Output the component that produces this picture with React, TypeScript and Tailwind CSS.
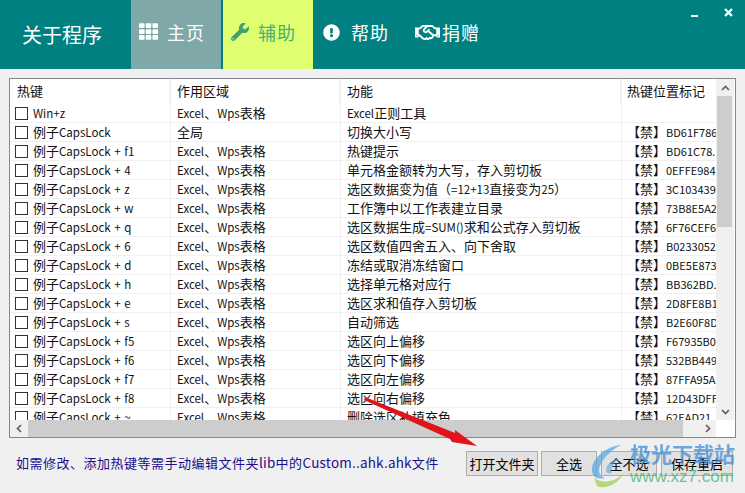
import { FaTh, FaWrench, FaExclamationCircle, FaRegHandshake } from "react-icons/fa";

const KEYS: [string, string, string, string][] = [
  ["Win+z", "Excel、Wps表格", "Excel正则工具", ""],
  ["例子CapsLock", "全局", "切换大小写", "【禁】BD61F786"],
  ["例子CapsLock + f1", "Excel、Wps表格", "热键提示", "【禁】BD61C78."],
  ["例子CapsLock + 4", "Excel、Wps表格", "单元格金额转为大写\uFF0C存入剪切板", "【禁】0EFFE984."],
  ["例子CapsLock + z", "Excel、Wps表格", "选区数据变为值\uFF08=12+13直接变为25\uFF09", "【禁】3C103439"],
  ["例子CapsLock + w", "Excel、Wps表格", "工作簿中以工作表建立目录", "【禁】73B8E5A2"],
  ["例子CapsLock + q", "Excel、Wps表格", "选区数据生成=SUM()求和公式存入剪切板", "【禁】6F76CEF6"],
  ["例子CapsLock + 6", "Excel、Wps表格", "选区数值四舍五入、向下舍取", "【禁】B0233052"],
  ["例子CapsLock + d", "Excel、Wps表格", "冻结或取消冻结窗口", "【禁】0BE5E873"],
  ["例子CapsLock + h", "Excel、Wps表格", "选择单元格对应行", "【禁】BB362BD."],
  ["例子CapsLock + e", "Excel、Wps表格", "选区求和值存入剪切板", "【禁】2D8FE8B1"],
  ["例子CapsLock + s", "Excel、Wps表格", "自动筛选", "【禁】B2E60F8D"],
  ["例子CapsLock + f5", "Excel、Wps表格", "选区向上偏移", "【禁】F67935B0"],
  ["例子CapsLock + f6", "Excel、Wps表格", "选区向下偏移", "【禁】532BB449"],
  ["例子CapsLock + f7", "Excel、Wps表格", "选区向左偏移", "【禁】87FFA95A"],
  ["例子CapsLock + f8", "Excel、Wps表格", "选区向右偏移", "【禁】12D43DFF"],
  ["例子CapsLock + ~", "Excel、Wps表格", "删除选区补填充色", "【禁】62EAD21"],
];

// CJK runs stay at the element's size; Latin runs are set a little smaller, as in the reference.
const Mixed = ({ text, latin = "text-[11.5px]" }: { text: string; latin?: string }) => (
  <>
    {text.split(/([\x20-\x7e]+)/).map((part, i) =>
      i % 2 === 1 ? (
        <span key={i} className={latin}>{part}</span>
      ) : (
        part
      ),
    )}
  </>
);

const Btn = ({ w, children }: { w: string; children: string }) => (
  <button className={`${w} h-[25px] border border-[#adadad] bg-[#e1e1e1] text-[13px] text-black`}>{children}</button>
);

export default function App() {
  return (
    <div className="relative w-[745px] h-[493px] overflow-hidden bg-[#f0f0f0] font-['Noto_Sans_CJK_SC','Microsoft_YaHei',sans-serif]">
      <header className="h-[69px] bg-[#008080] flex text-white relative">
        <div className="w-[131px] pl-[22px] pt-[21px] text-[20px] leading-[28px]">关于程序</div>
        <div className="w-[90px] bg-[#80a8a8] flex items-start pt-[20px] pl-[8px] text-[18px] leading-[24px] gap-[9px]">
          <FaTh className="w-[19px] h-[19px] mt-[2px]" />
          <span className="tracking-[1px]">主页</span>
        </div>
        <div className="ml-[2px] w-[90px] bg-[#e0ff70] text-[#4caf70] flex items-start pt-[20px] pl-[8px] text-[18px] leading-[24px] gap-[9px]">
          <FaWrench className="w-[18px] h-[18px] mt-[3px] text-[#3f9f72]" />
          <span className="tracking-[1px]">辅助</span>
        </div>
        <div className="ml-[10px] flex items-start pt-[20px] text-[18px] leading-[24px] gap-[11px]">
          <FaExclamationCircle className="w-[17px] h-[17px] mt-[4px]" />
          <span className="tracking-[1px]">帮助</span>
        </div>
        <div className="ml-[26px] flex items-start pt-[20px] text-[18px] leading-[24px] gap-[2px]">
          <FaRegHandshake className="w-[25px] h-[25px]" />
          <span className="tracking-[1px]">捐赠</span>
        </div>
        <div className="absolute left-[691px] top-[15px] w-[7px] h-[2px] bg-white" />
        <svg className="absolute left-[724px] top-[8px]" width="9" height="9" viewBox="0 0 9 9">
          <path d="M1 1l7 7M8 1l-7 7" stroke="#fff" strokeWidth="2.4" />
        </svg>
      </header>

      <div className="mt-[9px] ml-[9px] w-[727px] h-[360px] border border-[#828790] bg-white flex flex-col text-[13px] text-[#111]">
        <div className="flex flex-1 min-h-0">
          <div className="w-[706px] overflow-hidden">
            <div className="flex h-[25px] leading-[24px]">
              <div className="w-[161px] pl-[7px] border-r-2 border-[#f0f0f0]">热键</div>
              <div className="w-[170px] pl-[6px] border-r-2 border-[#f0f0f0]">作用区域</div>
              <div className="w-[281px] pl-[6px] border-r-2 border-[#f0f0f0]">功能</div>
              <div className="flex-1 pl-[5px] whitespace-nowrap">热键位置标记</div>
            </div>
            {KEYS.map((r, i) => (
              <div key={i} className="flex h-[19px] leading-[18px] border-b border-[#f0f0f0] whitespace-nowrap">
                <div className="w-[161px] flex items-center pl-[5px] gap-[5px] border-r border-[#f0f0f0]">
                  <span className="w-[13px] h-[13px] border border-[#333] bg-white shrink-0" />
                  <span className="[word-spacing:1px]"><Mixed text={r[0]} /></span>
                </div>
                <div className="w-[170px] pl-[6px] border-r border-[#f0f0f0]"><Mixed text={r[1]} /></div>
                <div className="w-[281px] pl-[6px] border-r border-[#f0f0f0]"><Mixed text={r[2]} /></div>
                <div className="w-[94px] overflow-hidden pl-[5px]"><Mixed text={r[3]} latin="text-[11px]" /></div>
              </div>
            ))}
          </div>
          <div className="w-[18px] bg-[#f0f0f0] flex flex-col relative">
            <div className="h-[17px] flex items-center justify-center">
              <svg width="9" height="6" viewBox="0 0 9 6"><path d="M1 5l3.5-3.5L8 5" fill="none" stroke="#606060" strokeWidth="1.7" /></svg>
            </div>
            <div className="h-[131px] ml-[1px] mr-[2px] bg-[#cdcdcd]" />
            <div className="flex-1" />
            <div className="h-[17px] flex items-center justify-center">
              <svg width="9" height="6" viewBox="0 0 9 6"><path d="M1 1l3.5 3.5L8 1" fill="none" stroke="#606060" strokeWidth="1.7" /></svg>
            </div>
          </div>
        </div>
        <div className="h-[17px] flex items-stretch bg-[#f0f0f0]">
          <div className="w-[18px] flex items-center justify-center">
            <svg width="6" height="9" viewBox="0 0 6 9"><path d="M5 1L1.5 4.5L5 8" fill="none" stroke="#606060" strokeWidth="1.7" /></svg>
          </div>
          <div className="w-[655px] bg-[#cdcdcd]" />
          <div className="w-[33px] flex items-center justify-end pr-[5px]">
            <svg width="6" height="9" viewBox="0 0 6 9"><path d="M1 1l3.5 3.5L1 8" fill="none" stroke="#606060" strokeWidth="1.7" /></svg>
          </div>
          <div className="flex-1 bg-white" />
        </div>
      </div>

      <div className="flex items-start mt-[12px] pl-[16px]">
        <div className="w-[450px] text-[13px] tracking-[0.5px] leading-[24px] text-[#1a0f8c] whitespace-nowrap">
          <Mixed text="如需修改、添加热键等需手动编辑文件夹lib中的Custom..ahk.ahk文件" latin="text-[13.5px] tracking-[0.2px]" />
        </div>
        <div className="flex mt-[1px]">
          <Btn w="w-[72px]">打开文件夹</Btn>
          <Btn w="ml-[3px] w-[56px]">全选</Btn>
          <Btn w="ml-[4px] w-[56px]">全不选</Btn>
          <Btn w="ml-[4px] w-[72px]">保存重启</Btn>
        </div>
      </div>

      <svg className="absolute left-[360px] top-[385px]" width="125" height="65" viewBox="0 0 125 65">
        <path d="M5 12L95 48L95 45L117 61L92 57L90 54L4 15Z" fill="#e0141b" />
      </svg>

      <svg className="absolute left-[585px] top-[440px]" width="70" height="50" viewBox="0 0 70 50">
        <path d="M36 5C22 6 8 18 7 28C6 37 13 40 20 38C15 36 13 32 15 26C18 17 28 9 36 5Z" fill="#5aa7e0" opacity=".75" />
        <path d="M34 18C27 20 21 25 21 30C21 33 24 34 27 33C25 30 28 23 34 18Z" fill="#5aa7e0" opacity=".6" />
        <path d="M9 37C15 44 28 43 38 34C33 44 20 50 12 46Z" fill="#a7d35a" opacity=".8" />
      </svg>
      <div className="absolute left-[630px] top-[439px] text-[21px] leading-[28px] font-bold text-[#3f8fd8]/75 whitespace-nowrap">极光下载站</div>
      <div className="absolute left-[630px] top-[467px] text-[17px] leading-[20px] text-[#3cb371]/75 whitespace-nowrap font-['Liberation_Sans']">www.xz7.com</div>
    </div>
  );
}
